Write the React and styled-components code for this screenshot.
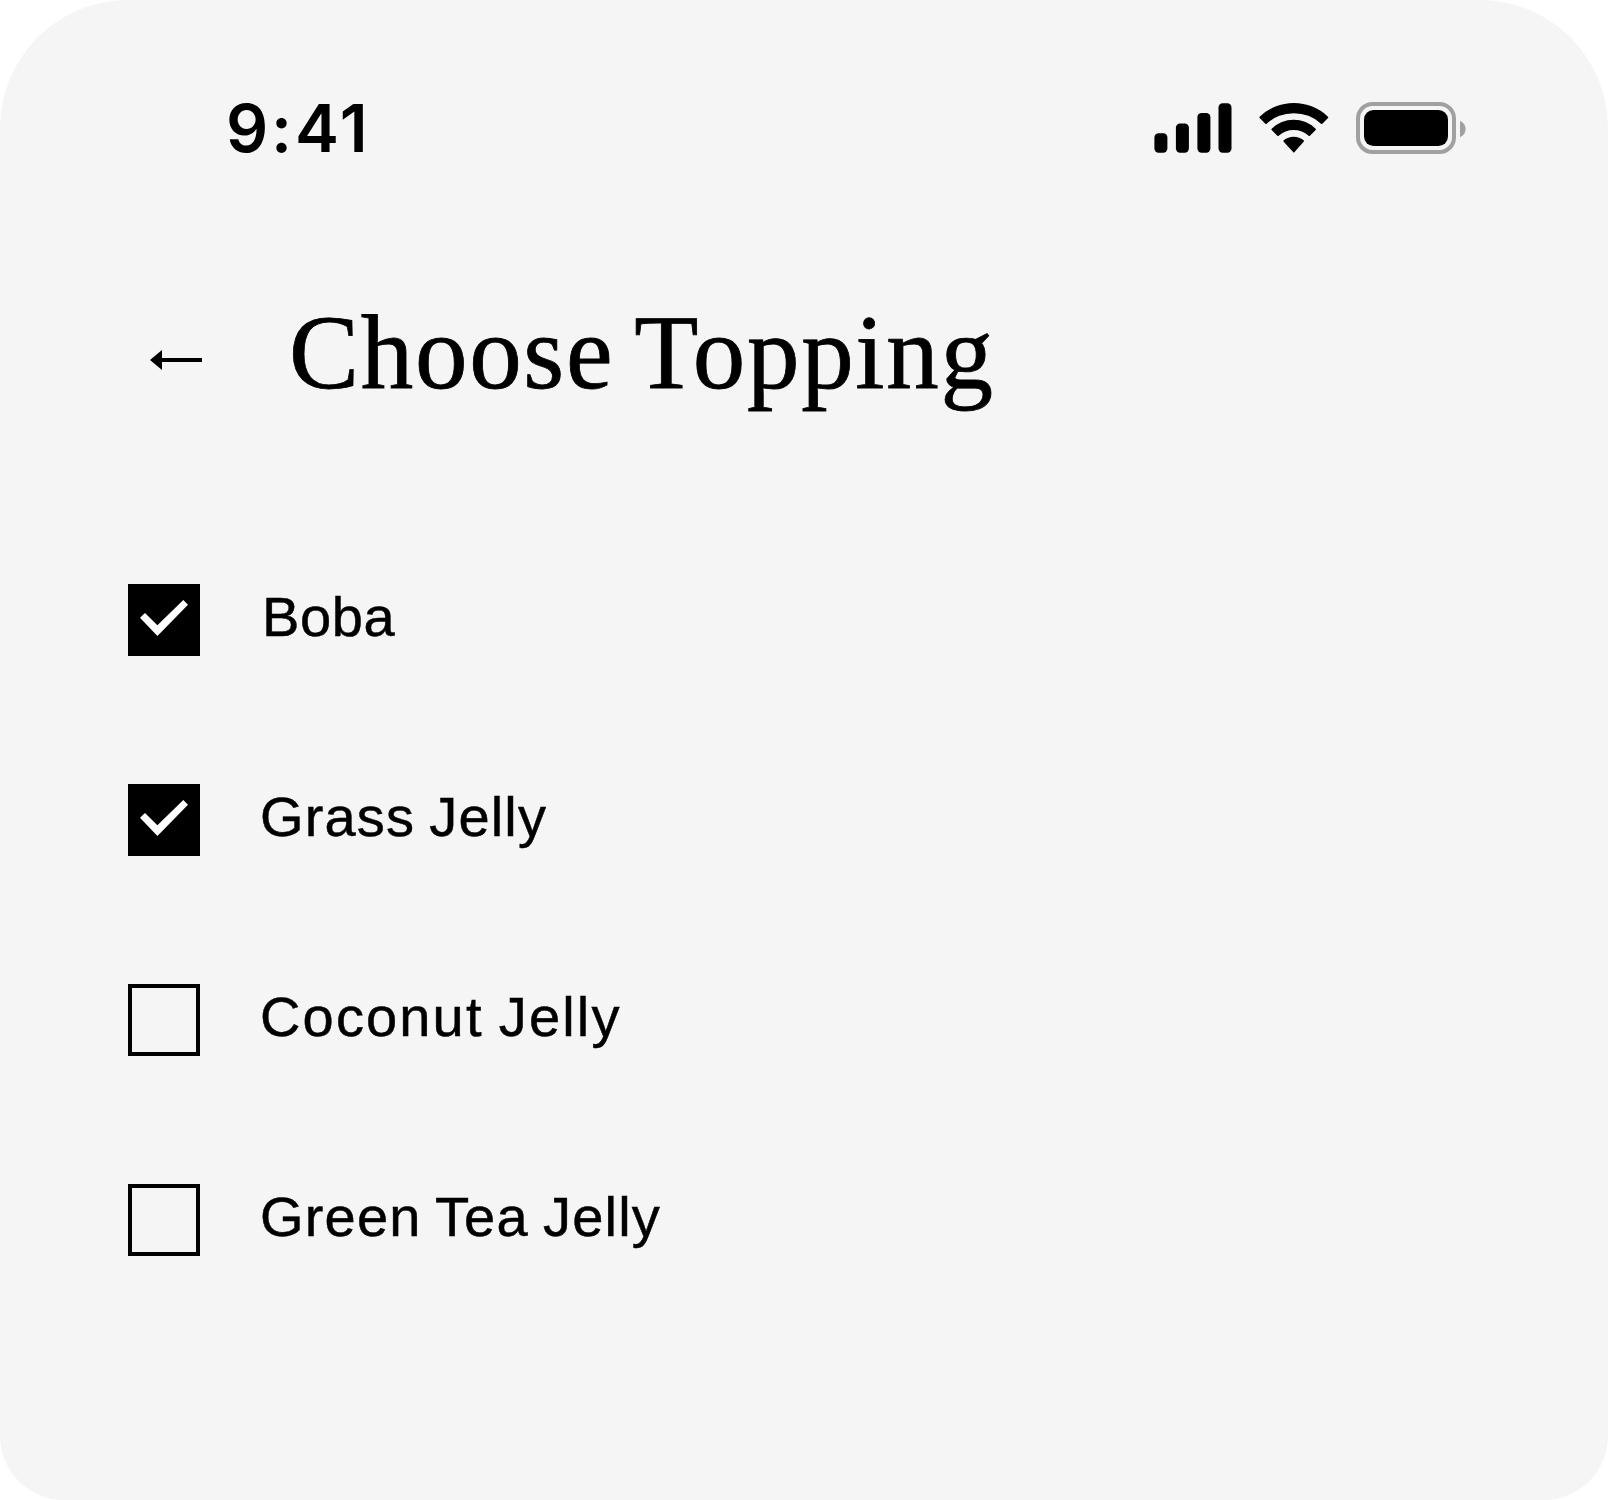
import React, { useState } from 'react';
import styled, { createGlobalStyle } from 'styled-components';

const GlobalStyle = createGlobalStyle`
  *, *::before, *::after { box-sizing: border-box; }
  body { margin: 0; background: #ffffff; }
`;

const Screen = styled.main`
  display: flex;
  flex-direction: column;
  width: 1608px;
  height: 1500px;
  overflow: hidden;
  border-radius: 128px 128px 64px 64px;
  background: #f5f5f5;
  color: #000000;
`;

const StatusBar = styled.div`
  display: flex;
  justify-content: space-between;
  height: 100px;
  margin-top: 78px;
  padding: 0 142px 0 226px;
`;

const Clock = styled.time`
  font: 600 66px/100px Inter, sans-serif;
  letter-spacing: 2.9px;
`;

const StatusIcons = styled.div`
  display: flex;
  align-items: flex-start;
  gap: 27px;
  padding-top: 24px;
`;

const Icon = styled.svg`
  display: block;
  flex: none;
  margin-top: ${({ $drop = 0 }) => $drop}px;
`;

const Header = styled.header`
  display: flex;
  align-items: center;
  gap: 87px;
  height: 120px;
  margin-top: 122px;
  padding-left: 150px;
`;

const BackButton = styled.button`
  display: flex;
  padding: 0;
  border: 0;
  background: none;
  cursor: pointer;
`;

const Title = styled.h1`
  margin: -14px 0 0;
  font: 400 105px/120px "Liberation Serif", serif;
  letter-spacing: 1.7px;
  word-spacing: -6px;
  white-space: nowrap;
  -webkit-text-stroke: 0.8px #000000;
`;

const Options = styled.div`
  display: flex;
  flex-direction: column;
  gap: 128px;
  margin-top: 164px;
  padding-left: 128px;
`;

const Option = styled.label`
  display: flex;
  align-items: flex-start;
  gap: 60px;
  height: 72px;
  cursor: pointer;
`;

const Checkbox = styled.button`
  display: block;
  flex: none;
  width: 72px;
  height: 72px;
  padding: 0;
  border: ${({ $checked }) => ($checked ? '0' : '4px solid #000000')};
  background: ${({ $checked }) => ($checked ? '#000000' : 'transparent')};
`;

const OptionName = styled.span`
  padding-left: ${({ $indent = 0 }) => $indent}px;
  font: 400 56px/66px "Liberation Sans", sans-serif;
  letter-spacing: ${({ $tracking }) => $tracking}px;
  word-spacing: -2.5px;
  white-space: nowrap;
  -webkit-text-stroke: 0.5px #000000;
`;

function SignalIcon() {
  return (
    <Icon $drop={1} width="78" height="50" viewBox="1154 103 78 50">
      <rect x="1154.4" y="133.3" width="13" height="19.4" rx="4.2" />
      <rect x="1175.9" y="123.4" width="13" height="29.3" rx="4.2" />
      <rect x="1197.4" y="113" width="13" height="39.7" rx="4.2" />
      <rect x="1218.5" y="103.2" width="13" height="49.5" rx="4.2" />
    </Icon>
  );
}

function WifiIcon() {
  return (
    <Icon $drop={1} width="70" height="50" viewBox="357 39 210 150">
      <path d="M359 84Q357 82 359 80A149 149 0 0 1 564 80Q566 82 564 84L547 101Q545 103 543 101A121 121 0 0 0 380 101Q378 103 376 101Z" />
      <path d="M395 120Q393 118 395 116A95 95 0 0 1 527 116Q529 118 527 120L510 137Q508 139 506 137A68 68 0 0 0 416 137Q414 139 412 137Z" />
      <path d="M431 155Q429 153 431 151A47 47 0 0 1 491 151Q493 153 491 155L463 187Q461.5 189 460 187Z" />
    </Icon>
  );
}

function BatteryIcon() {
  return (
    <Icon width="110" height="52" viewBox="1356 102 110 52">
      <rect x="1358" y="104" width="96" height="48" rx="14.5" fill="none" stroke="#a0a0a0" strokeWidth="4" />
      <rect x="1364" y="110" width="84" height="36" rx="9.5" />
      <path d="M1460 121C1463.5 122.4 1465.6 125.5 1465.6 129.1S1463.5 135.8 1460 137.3Z" fill="#a0a0a0" />
    </Icon>
  );
}

function ArrowIcon() {
  return (
    <Icon width="52" height="20" viewBox="0 0 52 20">
      <path d="M0 10L12 0V8H52V12H12V20Z" />
    </Icon>
  );
}

function CheckIcon() {
  return (
    <Icon width="72" height="72" viewBox="0 0 72 72">
      <path d="M12 33.7L17 29L29.4 41.3L55.3 16L60 20.7L29.4 52Z" fill="#ffffff" />
    </Icon>
  );
}

const toppings = [
  { name: 'Boba', tracking: 0.6, indent: 2 },
  { name: 'Grass Jelly', tracking: 1.15 },
  { name: 'Coconut Jelly', tracking: 2.15 },
  { name: 'Green Tea Jelly', tracking: 1.2 },
];

export default function App() {
  const [selected, setSelected] = useState(['Boba', 'Grass Jelly']);
  const toggle = (name) =>
    setSelected((list) =>
      list.includes(name) ? list.filter((item) => item !== name) : [...list, name]
    );

  return (
    <>
      <GlobalStyle />
      <Screen>
        <StatusBar>
          <Clock>9:41</Clock>
          <StatusIcons>
            <SignalIcon />
            <WifiIcon />
            <BatteryIcon />
          </StatusIcons>
        </StatusBar>
        <Header>
          <BackButton aria-label="Back">
            <ArrowIcon />
          </BackButton>
          <Title>Choose Topping</Title>
        </Header>
        <Options>
          {toppings.map(({ name, tracking, indent }) => {
            const checked = selected.includes(name);
            return (
              <Option key={name}>
                <Checkbox
                  role="checkbox"
                  aria-checked={checked}
                  $checked={checked}
                  onClick={() => toggle(name)}
                >
                  {checked && <CheckIcon />}
                </Checkbox>
                <OptionName $tracking={tracking} $indent={indent}>
                  {name}
                </OptionName>
              </Option>
            );
          })}
        </Options>
      </Screen>
    </>
  );
}
